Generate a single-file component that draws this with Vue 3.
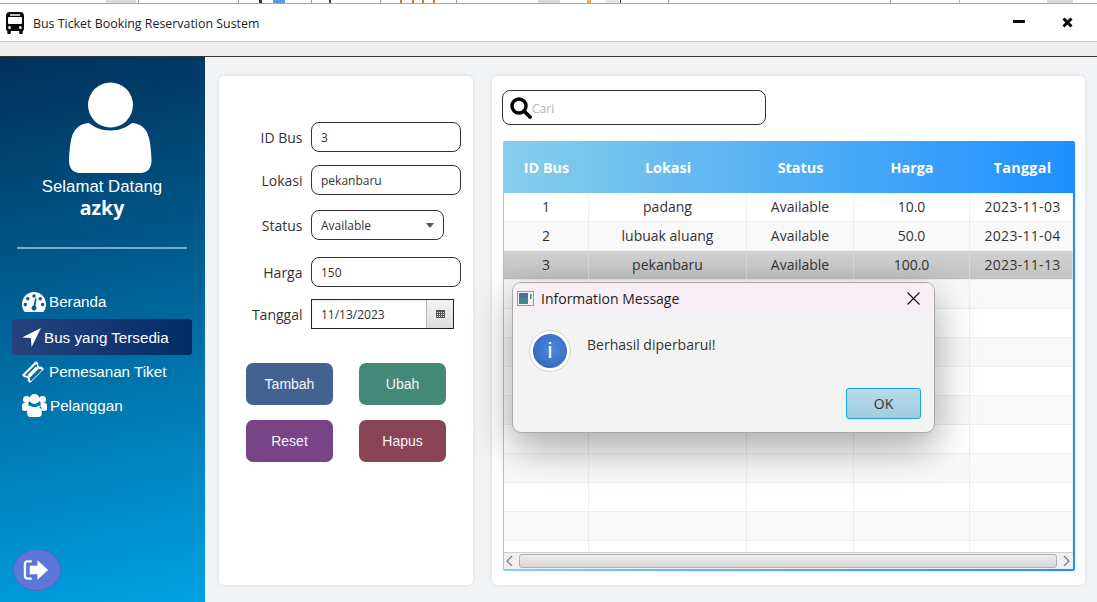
<template>
  <div class="window">
    <div class="behind">
      <span v-for="(f, i) in fragments" :key="i" class="frag" :style="{ left: f.x + 'px', width: f.w + 'px', background: f.c }"></span>
    </div>
    <header class="titlebar">
      <svg class="bus-icon" width="18" height="22" viewBox="0 0 20 22" preserveAspectRatio="none">
        <path fill="#0a0a0a" fill-rule="evenodd" d="M4 0h12c2.400 0 4 1.500 4 4v13c0 1-.6 1.600-1.400 1.800V21a1 1 0 0 1-1 1h-2a1 1 0 0 1-1-1v-2H5.400v2a1 1 0 0 1-1 1h-2a1 1 0 0 1-1-1v-2.200C.6 18.600 0 18 0 17V4C0 1.500 1.600 0 4 0zM5 2.300c-.5 0-.8.300-.8.700s.3.700.8.700h10c.5 0 .8-.3.800-.7s-.3-.7-.8-.7H5zM3.500 5C2.700 5 2.200 5.500 2.200 6.300v4.400c0 .8.500 1.300 1.300 1.300h13c.8 0 1.300-.5 1.300-1.300V6.300c0-.8-.5-1.300-1.300-1.300h-13zM4 14a1.500 1.500 0 1 0 0 3 1.500 1.500 0 0 0 0-3zm12 0a1.500 1.500 0 1 0 0 3 1.500 1.500 0 0 0 0-3z"/>
      </svg>
      <span class="app-title">Bus Ticket Booking Reservation Sustem</span>
      <span class="win-min"></span>
      <svg class="win-close" width="11" height="11" viewBox="0 0 11 11">
        <path d="M1.500 1.500l8 8M9.500 1.500l-8 8" stroke="#0a0a0a" stroke-width="3"/>
      </svg>
    </header>
    <div class="toolbar"></div>

    <div class="main">
      <aside class="sidebar">
        <svg class="avatar" width="84" height="91" viewBox="0 0 84 91">
          <circle cx="42.500" cy="23" r="22.500" fill="#fff"/>
          <path fill="#fff" d="M21 41c5 4 12 7.500 21.500 7.500S59 45 64 41c10 1 16 6 18 20 1 8 1.500 13 1.500 18 0 7-4 12-11 12H12C5 91 1 86 1 79c0-5 .5-10 1.500-18C4.500 47 11 42 21 41z"/>
        </svg>
        <div class="welcome">Selamat Datang</div>
        <div class="username">azky</div>
        <div class="divider"></div>
        <nav class="nav">
          <a class="nav-item">
            <svg width="24" height="20" viewBox="0 0 25 20" preserveAspectRatio="none">
              <path fill="#fff" fill-rule="evenodd" d="M12.500 0C5.600 0 0 5.400 0 12.200c0 2.600.8 5 2.200 7 .3.500.7.800 1.300.8h18c.6 0 1-.3 1.300-.8 1.400-2 2.200-4.400 2.200-7C25 5.400 19.400 0 12.500 0zM12.500 2.200a1.800 1.800 0 1 1 0 3.600 1.800 1.800 0 0 1 0-3.600zM6 5a1.800 1.800 0 1 1 0 3.600A1.800 1.800 0 0 1 6 5zm13 0a1.800 1.800 0 1 1 0 3.600A1.800 1.800 0 0 1 19 5zM3.500 10.800a1.800 1.800 0 1 1 0 3.600 1.800 1.800 0 0 1 0-3.600zm18 0a1.800 1.800 0 1 1 0 3.600 1.800 1.800 0 0 1 0-3.600zM15.300 6.500l-1.300 7.200c.7.600 1.100 1.300 1.100 2.300 0 1.500-1.200 2.600-2.600 2.600S9.900 17.500 9.900 16c0-1.300 1-2.400 2.200-2.600l1.500-7.200z"/>
            </svg>
            <span>Beranda</span>
          </a>
          <a class="nav-item active">
            <svg width="19" height="19" viewBox="0 0 19 19">
              <path fill="#fff" d="M19 0L0 9.500l8.800.6.800 8.900z"/>
            </svg>
            <span>Bus yang Tersedia</span>
          </a>
          <a class="nav-item ticket">
            <svg width="22" height="22" viewBox="0 0 22 22">
              <path fill="#fff" fill-rule="evenodd" d="M14 0l2.500 2.500c-.6 1-.4 2 .3 2.700s1.700.9 2.700.3L22 8 8 22l-2.500-2.500c.6-1 .4-2-.3-2.700s-1.700-.9-2.700-.3L0 14zM14 3L3 14l1 .9c1.300-.2 2.300.1 3.100.9s1.100 1.800.9 3.100l1 1L20 9l-1-.9c-1.300.2-2.300-.1-3.100-.9s-1.100-1.800-.9-3.100zM14 5.500L16.500 8 8 16.500 5.500 14z"/>
            </svg>
            <span>Pemesanan Tiket</span>
          </a>
          <a class="nav-item">
            <svg width="25" height="23" viewBox="0 0 25 23">
              <circle cx="4.500" cy="5.500" r="3.500" fill="#fff"/>
              <circle cx="20.500" cy="5.500" r="3.500" fill="#fff"/>
              <circle cx="12.500" cy="5" r="5" fill="#fff"/>
              <path fill="#fff" d="M0 11c0-1 1-2 2-2h4.500c-.4 2 .3 3.500 1.300 4.500-2 .8-3 2-3.300 3.500H2c-1 0-2-.7-2-2zM25 11c0-1-1-2-2-2h-4.500c.4 2-.3 3.500-1.300 4.500 2 .8 3 2 3.300 3.500H23c1 0 2-.7 2-2zM8 11.500c1.200 1 2.800 1.500 4.500 1.500s3.300-.5 4.500-1.500c1.800.3 2.800 2 2.800 4.500v3.500c0 2-1.300 3.500-3.300 3.500h-8C6.500 23 5.200 21.500 5.200 19.500V16c0-2.500 1-4.200 2.800-4.500z"/>
            </svg>
            <span>Pelanggan</span>
          </a>
        </nav>
        <button class="logout">
          <svg width="27" height="22" viewBox="0 0 28 22">
            <path fill="none" stroke="#fff" stroke-width="2.400" d="M9 2H5C3 2 2 3 2 5v12c0 2 1 3 3 3h4"/>
            <path fill="#fff" d="M7 6.500h8V1l11 10-11 10v-5.500H7z"/>
          </svg>
        </button>
      </aside>

      <section class="card form-card">
        <div class="form-row row-id">
          <label>ID Bus</label>
          <div class="field">3</div>
        </div>
        <div class="form-row row-lokasi">
          <label>Lokasi</label>
          <div class="field">pekanbaru</div>
        </div>
        <div class="form-row row-status">
          <label>Status</label>
          <div class="field select">
            <span>Available</span>
            <i class="caret"></i>
          </div>
        </div>
        <div class="form-row row-harga">
          <label>Harga</label>
          <div class="field">150</div>
        </div>
        <div class="form-row row-tanggal">
          <label>Tanggal</label>
          <div class="date">
            <span class="date-text">11/13/2023</span>
            <span class="date-btn">
              <svg width="9" height="8" viewBox="0 0 9 8">
                <path fill="#555" d="M0 0h9v8H0z"/>
                <path fill="#ddd" d="M1 2h1v1H1zM3 2h1v1H3zM5 2h1v1H5zM7 2h1v1H7zM1 4h1v1H1zM3 4h1v1H3zM5 4h1v1H5zM7 4h1v1H7zM1 6h1v1H1zM3 6h1v1H3zM5 6h1v1H5zM7 6h1v1H7z"/>
              </svg>
            </span>
          </div>
        </div>
        <div class="actions">
          <button class="btn btn-blue">Tambah</button>
          <button class="btn btn-green">Ubah</button>
          <button class="btn btn-purple">Reset</button>
          <button class="btn btn-red">Hapus</button>
        </div>
      </section>

      <section class="card table-card">
        <div class="search">
          <svg width="22" height="22" viewBox="0 0 22 22">
            <circle cx="9" cy="9" r="7" fill="none" stroke="#000" stroke-width="3.400"/>
            <path d="M14 14l6 6" stroke="#000" stroke-width="3.800" stroke-linecap="round"/>
          </svg>
          <span class="placeholder">Cari</span>
        </div>
        <div class="table-frame">
          <div class="table-inner">
            <div class="thead">
              <div v-for="h in headers" :key="h" class="th">{{ h }}</div>
            </div>
            <div class="tbody">
              <div
                v-for="(row, idx) in rows"
                :key="idx"
                :class="['tr', { odd: idx % 2 === 1, selected: idx === 2 }]"
              >
                <div v-for="(cell, c) in row" :key="c" class="td">{{ cell }}</div>
              </div>
            </div>
            <div class="scrollbar">
              <svg width="7" height="10" viewBox="0 0 7 10"><path d="M6 0L1 5l5 5" fill="none" stroke="#777" stroke-width="1.200"/></svg>
              <div class="thumb"></div>
              <svg width="7" height="10" viewBox="0 0 7 10"><path d="M1 0l5 5-5 5" fill="none" stroke="#777" stroke-width="1.200"/></svg>
            </div>
          </div>
        </div>
      </section>
    </div>

    <div class="dialog">
      <div class="dialog-title">
        <svg width="17" height="15" viewBox="0 0 17 15">
          <rect x=".5" y=".5" width="16" height="14" fill="#f4f4f4" stroke="#999"/>
          <rect x="2" y="2" width="9" height="11" fill="#3f8a86"/>
          <rect x="2" y="2" width="9" height="5" fill="#4b6f9c"/>
          <rect x="13" y="3" width="1.500" height="5" fill="#3f8a86"/>
        </svg>
        <span class="dialog-caption">Information Message</span>
        <svg class="dialog-x" width="13" height="13" viewBox="0 0 13 13">
          <path d="M.5.500l12 12M12.500.500l-12 12" stroke="#111" stroke-width="1.100"/>
        </svg>
      </div>
      <div class="dialog-body">
        <div class="info-icon"><span>i</span></div>
        <p>Berhasil diperbarui!</p>
      </div>
      <div class="dialog-foot">
        <button class="ok">OK</button>
      </div>
    </div>
  </div>
</template>

<script setup>
const headers = ['ID Bus', 'Lokasi', 'Status', 'Harga', 'Tanggal']

const rows = [
  ['1', 'padang', 'Available', '10.0', '2023-11-03'],
  ['2', 'lubuak aluang', 'Available', '50.0', '2023-11-04'],
  ['3', 'pekanbaru', 'Available', '100.0', '2023-11-13'],
  ...Array.from({ length: 10 }, () => ['', '', '', '', ''])
]

// bits of the browser window showing above the app
const fragments = [
  { x: 106, w: 30, c: '#ddd' },
  { x: 138, w: 1, c: '#999' },
  { x: 238, w: 1, c: '#999' },
  { x: 259, w: 3, c: '#333' },
  { x: 273, w: 12, c: '#5a9be0' },
  { x: 311, w: 1, c: '#999' },
  { x: 329, w: 2, c: '#444' },
  { x: 380, w: 1, c: '#999' },
  { x: 400, w: 2, c: '#e0703f' },
  { x: 412, w: 2, c: '#e0703f' },
  { x: 422, w: 2, c: '#e0703f' },
  { x: 433, w: 2, c: '#e0703f' },
  { x: 456, w: 1, c: '#999' },
  { x: 538, w: 22, c: '#d8d8d8' },
  { x: 587, w: 4, c: '#e8b050' },
  { x: 605, w: 14, c: '#e4e4e4' },
  { x: 620, w: 1, c: '#333' },
  { x: 668, w: 1, c: '#999' },
  { x: 890, w: 1, c: '#999' },
  { x: 959, w: 1, c: '#bbb' },
  { x: 1047, w: 26, c: '#ddd' }
]
</script>

<style>
body {
  margin: 0;
  overflow: hidden;
}
</style>

<style scoped>
.window {
  position: relative;
  width: 1097px;
  height: 602px;
  display: flex;
  flex-direction: column;
  overflow: hidden;
  background: #f2f3f4;
  font-family: "Open Sans", "Noto Sans", sans-serif;
  color: #2b2b2b;
}

.behind {
  position: relative;
  flex: none;
  height: 3px;
  background: #fff;
  border-bottom: 1px solid #a8a8a8;
}

.frag {
  position: absolute;
  top: 0;
  height: 3px;
}

.titlebar {
  flex: none;
  height: 37px;
  display: flex;
  align-items: center;
  padding: 0 24px 0 6px;
  background: #fff;
  border-bottom: 1px solid #c4c4c4;
}

.bus-icon {
  margin-right: 9px;
}

.app-title {
  margin-top: 2px;
  font-size: 12.400px;
  color: #222;
}

.win-min {
  width: 12px;
  height: 3px;
  margin-left: auto;
  margin-right: 37px;
  margin-bottom: 3px;
  background: #0a0a0a;
}

.win-close {
  margin-bottom: 1px;
}

.toolbar {
  flex: none;
  height: 14px;
  background: #eee;
  border-bottom: 1px solid #333;
}

.main {
  flex: 1;
  min-height: 0;
  display: flex;
}

.sidebar {
  flex: none;
  width: 205px;
  box-sizing: border-box;
  display: flex;
  flex-direction: column;
  align-items: center;
  padding: 25px 13px 11px 12px;
  background: linear-gradient(168deg, #00305a 0%, #005c8f 40%, #0082bd 72%, #00a2e3 100%);
  font-family: "Liberation Sans", Arial, sans-serif;
  color: #fff;
}

.avatar {
  flex: none;
  margin-left: 15px;
}

.welcome {
  margin-top: 5px;
  font-size: 16.800px;
  line-height: 18px;
}

.username {
  font-family: "Open Sans", sans-serif;
  font-size: 19.500px;
  font-weight: 700;
  line-height: 24px;
}

.divider {
  flex: none;
  align-self: flex-start;
  width: 170px;
  height: 2px;
  margin: 27px 0 0 5px;
  background: rgba(255, 255, 255, 0.5);
}

.nav {
  align-self: stretch;
  margin-top: 35px;
  display: flex;
  flex-direction: column;
}

.nav-item {
  height: 35px;
  display: flex;
  align-items: center;
  gap: 3px;
  padding-left: 10px;
  font-size: 15.200px;
  color: #fff;
}

.nav-item.active {
  height: 36px;
  border-radius: 3px;
  background: linear-gradient(90deg, #27427f, #012c66);
}

.nav-item.ticket {
  height: 33px;
  gap: 5px;
}

.logout {
  margin-top: auto;
  margin-left: 1px;
  align-self: flex-start;
  width: 48px;
  height: 42px;
  padding: 0 2px 0 0;
  display: flex;
  align-items: center;
  justify-content: center;
  border: 1px solid #4e68c4;
  border-radius: 50%;
  background: #5b78d8;
}

.card {
  box-sizing: border-box;
  height: 509px;
  margin-top: 19px;
  border-radius: 5px;
  background: #fff;
  box-shadow: 0 0 3px rgba(170, 195, 225, 0.5);
}

.form-card {
  flex: none;
  width: 254px;
  margin-left: 14px;
  padding-top: 46px;
}

.form-row {
  display: flex;
  align-items: center;
  gap: 8.500px;
}

.form-row label {
  flex: none;
  width: 83.500px;
  text-align: right;
  font-size: 14px;
  color: #333;
}

.row-lokasi { margin-top: 13px; }
.row-status { margin-top: 15px; }
.row-harga { margin-top: 17px; }
.row-tanggal { margin-top: 12px; }

.field {
  box-sizing: border-box;
  width: 150px;
  height: 30px;
  display: flex;
  align-items: center;
  padding-left: 9px;
  border: 1px solid #333;
  border-radius: 8px;
  font-size: 12px;
  color: #333;
}

.select {
  width: 133px;
  justify-content: space-between;
  padding-right: 9px;
}

.caret {
  width: 0;
  height: 0;
  border-left: 4.500px solid transparent;
  border-right: 4.500px solid transparent;
  border-top: 5px solid #555;
}

.date {
  box-sizing: border-box;
  width: 143px;
  height: 30px;
  display: flex;
  border: 1px solid #222;
  box-shadow: inset 0 2px 2px #eee;
  font-size: 12px;
  color: #333;
}

.date-text {
  flex: 1;
  align-self: center;
  padding-left: 9px;
}

.date-btn {
  flex: none;
  width: 26px;
  display: flex;
  align-items: center;
  justify-content: center;
  border-left: 1px solid #bbb;
  background: linear-gradient(#f2f2f2, #ddd);
}

.actions {
  display: grid;
  grid-template-columns: 87px 87px;
  grid-auto-rows: 42px;
  gap: 15px 26px;
  margin: 34px 0 0 27px;
}

.btn {
  padding: 0;
  border: 0;
  border-radius: 7px;
  font-family: "Liberation Sans", Arial, sans-serif;
  font-size: 14px;
  color: #f4f4f4;
}

.btn-blue { background: #446290; }
.btn-green { background: #448877; }
.btn-purple { background: #774488; }
.btn-red { background: #884455; }

.table-card {
  flex: none;
  width: 593px;
  margin-left: 19px;
  padding: 14px 10px 0 10px;
}

.search {
  box-sizing: border-box;
  width: 264px;
  height: 35px;
  display: flex;
  align-items: center;
  padding-left: 7px;
  border: 1px solid #333;
  border-radius: 8px;
}

.placeholder {
  margin-top: 2px;
  font-size: 12px;
  color: #b5b5b5;
}

.table-frame {
  box-sizing: border-box;
  width: 572px;
  height: 430px;
  margin: 16px 0 0 1px;
  padding: 1px 2px 2px 1px;
  border-radius: 2px;
  background: linear-gradient(90deg, #87ceeb, #1e90ff);
}

.table-inner {
  height: 100%;
  display: flex;
  flex-direction: column;
  overflow: hidden;
  background: #fff;
}

.thead,
.tr {
  display: grid;
  grid-template-columns: 85px 158px 107px 116px 103px;
}

.thead {
  flex: none;
  height: 51px;
  align-items: center;
  background: linear-gradient(90deg, #87ceeb, #1e90ff);
}

.th {
  padding-bottom: 1px;
  text-align: center;
  font-size: 14.400px;
  font-weight: 700;
  color: #fff;
}

.th:last-child {
  padding-left: 2px;
  letter-spacing: 0.3px;
}

.tbody {
  flex: 1;
  min-height: 0;
  overflow: hidden;
}

.tr {
  height: 29px;
  box-sizing: border-box;
  border-bottom: 1px solid #eee;
}

.tr.odd {
  background: #f9f9f9;
}

.tr.selected {
  background: linear-gradient(#d2d2d2, #c2c2c2);
}

.td {
  display: flex;
  align-items: center;
  justify-content: center;
  padding-bottom: 2px;
  border-right: 1px solid #eee;
  font-size: 14px;
  color: #333;
}

.td:last-child {
  padding-left: 3px;
  letter-spacing: 0.3px;
}

.selected .td {
  border-right-color: #d8d8d8;
}

.scrollbar {
  flex: none;
  height: 17px;
  display: flex;
  align-items: center;
  justify-content: space-between;
  padding: 0 3px 0 2px;
  border-top: 1px solid #d0d0d0;
  box-sizing: border-box;
  background: #f0f0f0;
}

.thumb {
  width: 538px;
  height: 14px;
  box-sizing: border-box;
  border: 1px solid #b0b0b0;
  border-radius: 3px;
  background: linear-gradient(#ececec, #d8d8d8);
}

.dialog {
  position: absolute;
  left: 512px;
  top: 282px;
  width: 423px;
  height: 151px;
  display: flex;
  flex-direction: column;
  overflow: hidden;
  border: 1px solid #a9a9a9;
  box-sizing: border-box;
  border-radius: 9px;
  background: #f3f3f3;
  box-shadow: 0 14px 40px rgba(0, 0, 0, 0.36);
}

.dialog-title {
  flex: none;
  height: 30px;
  display: flex;
  align-items: center;
  padding: 0 14px 0 4px;
  background: #f8eef5;
}

.dialog-caption {
  margin-left: 7px;
  font-size: 14px;
  color: #1c1c1c;
}

.dialog-x {
  margin-left: auto;
}

.dialog-body {
  flex: none;
  display: flex;
  align-items: flex-start;
  padding: 17px 0 0 16px;
}

.dialog-body p {
  margin: 5px 0 0 16px;
  font-size: 14px;
  line-height: 20px;
  color: #333;
}

.info-icon {
  box-sizing: border-box;
  width: 42px;
  height: 42px;
  display: flex;
  align-items: center;
  justify-content: center;
  border: 4px solid #fff;
  outline: 1px solid #d0d0d0;
  outline-offset: -1px;
  border-radius: 50%;
  background: radial-gradient(circle at 55% 45%, #4d8ade, #2f5eb8);
  font-family: "Liberation Sans", Arial, sans-serif;
  font-size: 22px;
  color: #fff;
}

.dialog-foot {
  margin-top: auto;
  display: flex;
  justify-content: flex-end;
  padding: 0 13px 13px 0;
}

.ok {
  box-sizing: border-box;
  width: 75px;
  height: 31px;
  padding: 0;
  border: 1px solid #10a8e0;
  border-radius: 3px;
  background: linear-gradient(#b6dbeb, #a2cbdf);
  font-family: "Open Sans", sans-serif;
  font-size: 14px;
  color: #333;
}
</style>
